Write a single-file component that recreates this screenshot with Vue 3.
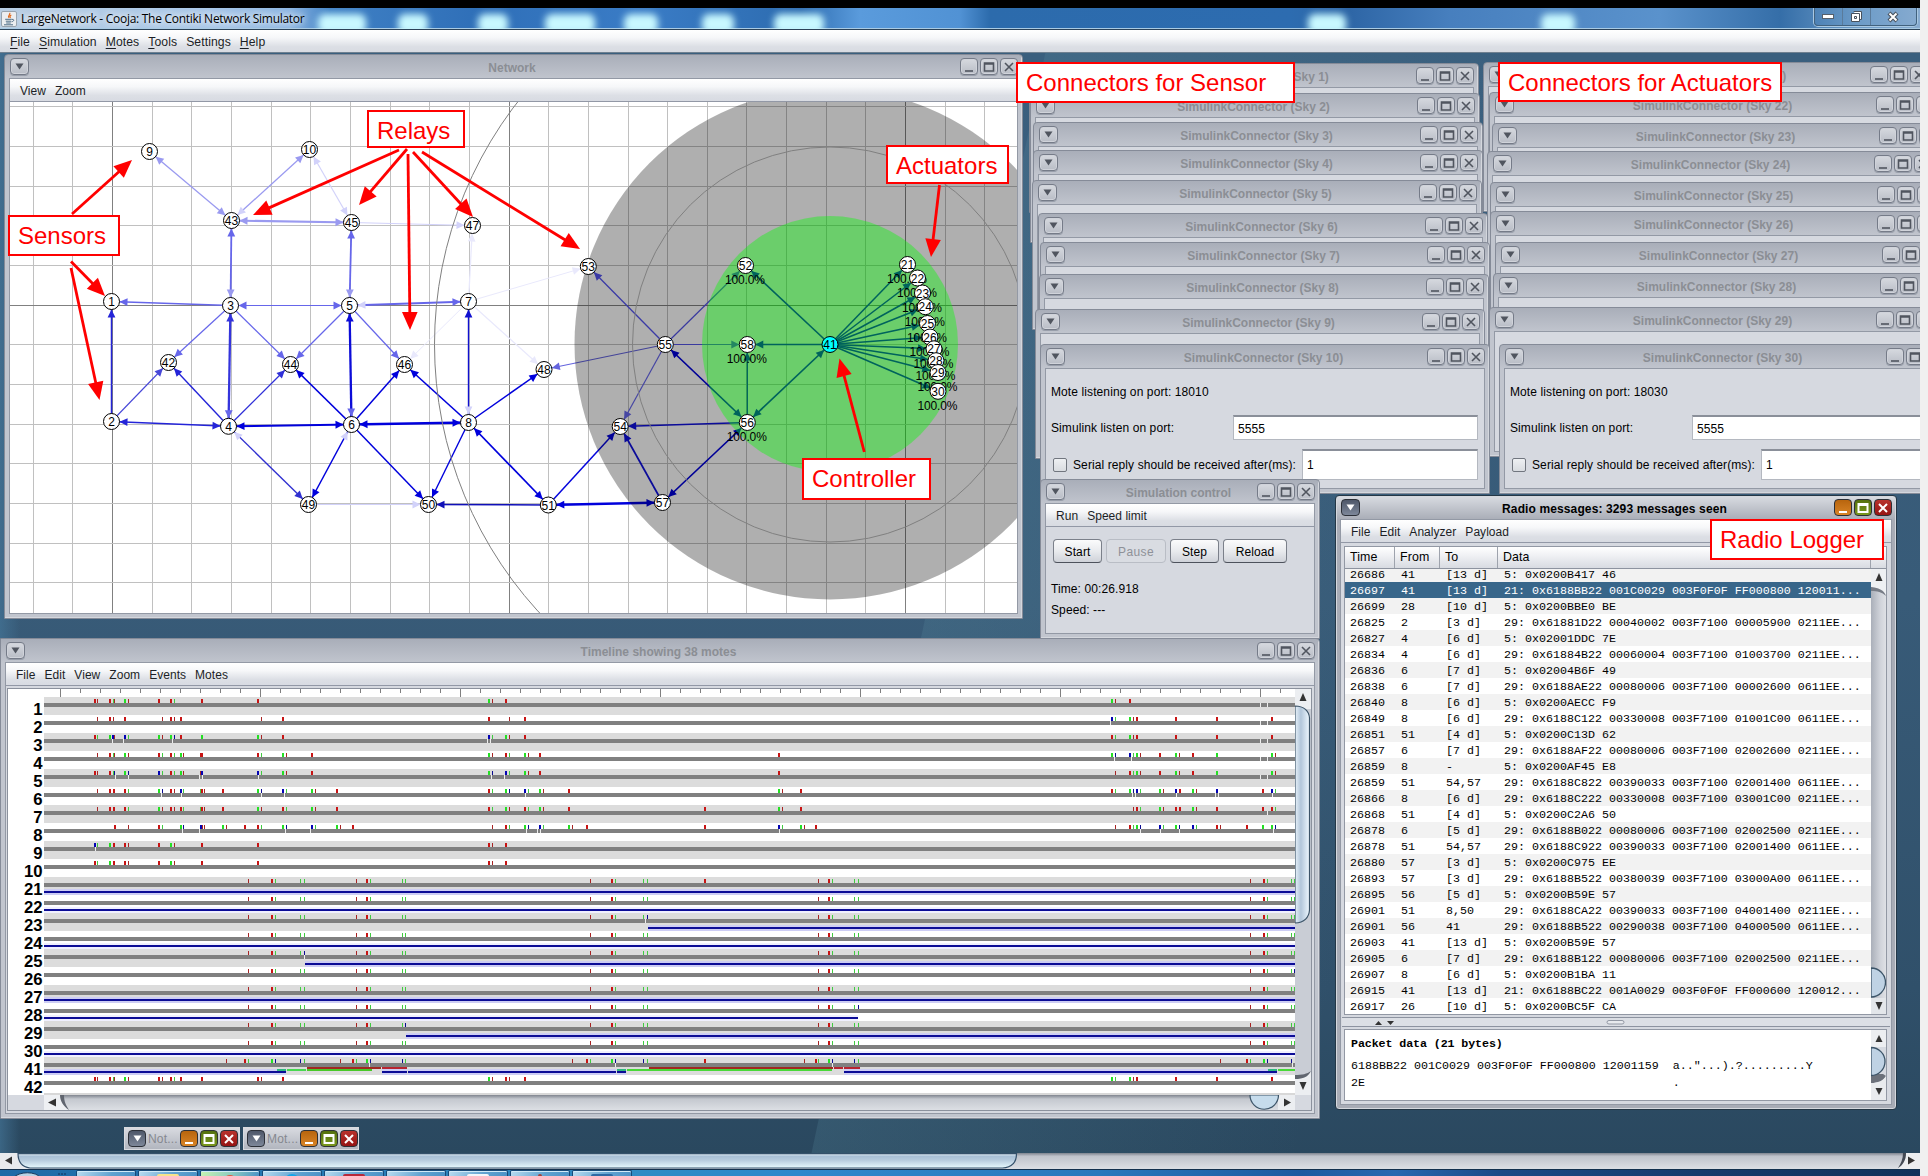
<script setup>
const stack = (base, list) => list.map(([n, x, y]) => ({
  kind: 'connector', title: `SimulinkConnector (Sky ${n})`, x: base + x, y, w: 450, h: 150, port: 18000 + n
}))

const windows = [
  { kind: 'network', title: 'Network', x: 4, y: 54, w: 1019, h: 565, menus: ['View', 'Zoom'] },
  ...stack(1483, [[21, 0, 62], [22, 6, 92], [23, 9, 123], [24, 4, 151], [25, 7, 182], [26, 7, 211], [27, 12, 242], [28, 10, 273], [29, 6, 307], [30, 16, 344]]),
  ...stack(1029, [[1, 0, 63], [2, 1, 93], [3, 4, 122], [4, 4, 150], [5, 3, 180], [6, 9, 213], [7, 11, 242], [8, 10, 274], [9, 6, 309], [10, 11, 344]]),
  { kind: 'control', title: 'Simulation control', x: 1040, y: 479, w: 280, h: 160, menus: ['Run', 'Speed limit'] },
  { kind: 'radio', title: 'Radio messages: 3293 messages seen', x: 1335, y: 495, w: 562, h: 615, active: true, menus: ['File', 'Edit', 'Analyzer', 'Payload'] },
  { kind: 'timeline', title: 'Timeline showing 38 motes', x: 0, y: 638, w: 1320, h: 481, menus: ['File', 'Edit', 'View', 'Zoom', 'Events', 'Motes'] }
]
const box = (w) => ({ left: w.x + 'px', top: w.y + 'px', width: w.w + 'px', height: w.h + 'px' })

/* ---- network graph ---- */
const vLines = [33, 72, 112, 152, 191, 231, 271, 310, 350, 390, 429, 469, 509, 548, 588, 628, 667, 707, 746, 786, 826, 865, 905, 945, 984]
const hLines = [106, 146, 186, 225, 265, 305, 344, 384, 424, 463, 503, 543, 582]
const darkV = [112, 509, 905]

const nodes = {
  1: [111.5, 301.5], 2: [111.5, 421.5], 3: [230.5, 305.5], 4: [228.5, 426.3], 5: [349.5, 305.5], 6: [351.5, 424.5],
  7: [468.5, 301.5], 8: [468.5, 422.5], 9: [149.5, 151.5], 10: [309.5, 149.5],
  21: [907.5, 264.5], 22: [917.5, 278], 23: [922.5, 293], 24: [925.3, 306.7], 25: [927.5, 323.5], 26: [930, 337],
  27: [934, 348.8], 28: [936, 360.7], 29: [938, 372.5], 30: [938, 391.3],
  41: [830, 344.5], 42: [168.5, 362.5], 43: [231.5, 220.5], 44: [290.5, 364.5], 45: [351.5, 222.5], 46: [404.5, 364.5],
  47: [472.5, 225.5], 48: [544, 369.5], 49: [308.5, 504.5], 50: [428.5, 504.5], 51: [548.3, 505], 52: [745.5, 265.5],
  53: [588.3, 266.5], 54: [620.2, 426.5], 55: [665.3, 344.5], 56: [747.3, 422.5], 57: [662.5, 502.5], 58: [747.3, 344.5]
}
const reached = new Set([52, 58, 56, 21, 22, 23, 24, 25, 26, 27, 28, 29, 30])
const nodeList = Object.entries(nodes).map(([id, p]) => ({ id, x: p[0], y: p[1], pct: reached.has(+id) }))

// from, to, colour, stroke width, colour of the arrow pointing back (optional)
const P = '#9a9af0', L = '#d2d2fa', V = '#e9e9fc', M = '#6666ea', D = '#2424d8', F = '#0000dc'
const links = [
  [43, 9, P, 1.3, P], [43, 10, P, 1.3, L], [45, 10, L, 1.2, L], [43, 45, P, 2, P], [45, 47, L, 1.1],
  [3, 43, M, 1.8, P], [5, 45, M, 1.8, P], [7, 47, V, 1.3], [3, 1, M, 1.6], [3, 5, M, 1.2, M], [5, 7, M, 1.8, L],
  [7, 53, V, 1], [7, 46, V, 1], [7, 48, V, 1.2], [3, 42, M, 1.2], [3, 44, M, 1.2], [5, 44, M, 1.3], [5, 46, M, 1.2],
  [2, 1, D, 1.5], [2, 42, '#4747d8', 1.1], [4, 42, D, 1.4], [4, 44, '#3030d8', 1.3], [6, 44, F, 1.7], [6, 46, F, 1.5],
  [8, 46, F, 1.6], [4, 3, '#3434dc', 2.3, M], [6, 5, '#0c0cd8', 2.3, M], [8, 7, '#1010d0', 1.4, L], [2, 4, D, 1.6, D],
  [4, 6, F, 2, F], [6, 8, F, 2.3, F], [4, 49, '#3030d0', 1.3, L], [6, 49, F, 1.5, L], [6, 50, F, 1.5], [8, 50, F, 1.4],
  [49, 50, L, 1.2], [51, 50, '#1010b8', 1.5], [8, 51, F, 1.7, F], [8, 48, F, 1.5], [55, 48, '#6464de', 1.2],
  [55, 53, '#5555f2', 1.3], [55, 52, '#5555e8', 1.2], [55, 58, '#5555e8', 1.2], [55, 54, '#6666ee', 1.2],
  [55, 56, F, 1.7, F], [51, 54, '#0505dd', 1.5], [57, 54, '#1010e0', 1.7], [56, 54, '#1010e0', 1.6], [51, 57, F, 2.3, F],
  [57, 56, F, 1.7, F], [41, 56, F, 1.7, F], [41, 58, F, 1.5], [56, 58, F, 1.3], [41, 52, F, 1.6],
  ...[21, 22, 23, 24, 25, 26, 27, 28, 29, 30].map((n) => [41, n, F, 1.5])
]
function head(x, y, dx, dy, len, half) {
  const bx = x - dx * len, by = y - dy * len
  return `${x},${y} ${bx - dy * half},${by + dx * half} ${bx + dy * half},${by - dx * half}`
}
const linkList = links.map(([a, b, color, width, back]) => {
  const [x1, y1] = nodes[a], [x2, y2] = nodes[b]
  const d = Math.hypot(x2 - x1, y2 - y1), dx = (x2 - x1) / d, dy = (y2 - y1) / d
  return {
    x1, y1, x2, y2, color, width, back,
    end: head(x2 - dx * 8, y2 - dy * 8, dx, dy, 8, 3.9),
    start: head(x1 + dx * 8, y1 + dy * 8, -dx, -dy, 8, 3.9)
  }
})

/* ---- annotations ---- */
const notes = [
  ['Sensors', 8, 215, 112, 41], ['Relays', 367, 110, 98, 38], ['Actuators', 886, 145, 123, 39],
  ['Controller', 802, 458, 129, 42], ['Connectors for Sensor', 1016, 62, 279, 41],
  ['Connectors for Actuators', 1498, 62, 284, 40], ['Radio Logger', 1710, 519, 174, 41]
].map(([text, x, y, w, h]) => ({ text, x, y, w, h }))
const arrows = [
  [72, 214, 132, 160], [71, 261.5, 105, 296], [71, 268, 99.5, 400], [399, 150, 253, 215], [407, 149, 359, 205],
  [408, 154, 410, 330], [413, 152, 473, 217], [422, 152, 580, 249], [939.5, 185, 931, 257], [864.3, 452, 839.5, 358.5]
].map(([x1, y1, x2, y2]) => {
  const d = Math.hypot(x2 - x1, y2 - y1), dx = (x2 - x1) / d, dy = (y2 - y1) / d
  return { x1, y1, x2: x2 - dx * 12, y2: y2 - dy * 12, tip: head(x2, y2, dx, dy, 18, 7.8) }
})

/* ---- timeline ---- */
const hue = { R: '#c81414', r: '#a82424', G: '#24e024', g: '#40cc40', B: '#0404b4', b: '#0c0c90' }
const common = 'r248 R272 g275 g300 g304 r356 R367 g370 g402 g405 r590 R612 g615 g643 g647 r818 R829 g832 g854 g858 r1250 R1264 g1267 g1291 g1294'
const FULL = [[44, 1295]]
const raw = [
  [1, 'R95 r97 R110 g113 r114 G125 r128 R159 R171 g174 R202 R258 G489 r492 R506 G1112 r1115 R1130', [1260, 1267]],
  [2, 'r97 R110 r113 R125 r162 R171 r174 R181 r261 R283 R489 r509 R525 B1112 g1115 G1130 r1133 R1137 R1176 R1217 R1272', [1110, 1260, 1267]],
  [3, 'R95 g97 G110 B113 r114 B125 g128 G159 r162 G171 b174 R181 G202 G258 r261 R283 B489 g492 G506 r509 R525 R1112 g1115 G1130 r1133 R1137 R1176 R1217 R1272', [112, 123, 172, 487, 490, 1260, 1267]],
  [4, 'r97 R110 g113 r114 G125 r128 R159 g162 R171 g174 G181 r183 R201 R202 R258 g261 G283 r286 R312 G489 r492 R506 g509 G525 r528 R540 R779 G1112 b1115 B1130 g1133 G1137 r1140 R1160 G1176 r1179 R1193 G1217 G1272 r1275', [1114, 1131, 1260, 1267]],
  [5, 'R95 r97 R110 g113 b114 G125 b128 B159 g162 R171 g174 G181 r183 r200 B202 B258 g261 G283 r286 R312 G489 b492 B506 g509 G525 r528 R540 R779 r1115 R1130 g1133 G1137 r1140 R1160 G1176 r1179 R1193 G1217 G1272 r1275', [115, 128, 199, 202, 258, 491, 504, 1260, 1267]],
  [6, 'r97 R110 R114 R125 g128 G159 b162 R171 r174 B181 g183 g200 R202 r204 R223 G258 b261 B283 g286 G312 r315 R337 R489 g492 G506 b509 B525 g528 G540 r543 R569 G779 r782 R801 R1112 g1115 G1130 b1133 B1137 g1140 G1160 r1163 B1176 R1180 G1193 r1196 B1217 R1263 B1272 g1275', [161, 181, 261, 284, 525, 1132, 1135, 1176, 1215, 1218, 1272]],
  [7, 'r97 R110 R114 R125 g128 G159 r162 R171 r174 R181 g183 g200 R202 r204 R223 G258 r261 R283 g286 G312 r315 R337 R489 g492 G506 r509 R525 g528 G540 r543 R569 R705 G779 r782 R801 r1133 R1137 g1140 G1160 r1163 R1176 R1180 G1193 r1196 R1217 R1263 R1272 g1275', [1267]],
  [8, 'R115 r128 R159 g162 G181 b183 B201 r202 r204 G223 r226 R245 R258 g261 G283 b286 B312 g315 G337 r340 R353 r492 R506 g509 G525 b528 B540 g543 G569 r572 R587 R705 B779 g782 G801 r804 R816 r1115 R1130 g1133 G1137 b1140 B1160 g1163 G1176 b1179 B1193 g1196 R1217 r1220 R1247 G1263 G1272 b1275', [182, 199, 285, 310, 526, 537, 540, 779, 1140, 1160, 1179, 1273]],
  [9, 'B95 g97 G110 R114 R125 r128 R159 G171 r174 R202 R258 R489 r492 R506', [95]],
  [10, 'R95 g97 G110 R114 R125 r128 R159 G171 r174 R202 R258 R489 r492 R506', []],
  [21, common + ' R705', [], FULL], [22, common, [], FULL],
  [23, common.replace('g647', 'b647'), [645], [[648, 1295]]], [24, common, [], FULL],
  [25, common.replace('g304', 'b304'), [304], [[305, 1295]]], [26, common.replace('g1294', 'b1294'), []],
  [27, common, [], FULL], [28, common.replace('g858', 'b858'), [], [[44, 858]]],
  [29, common.replace('g405', 'b405'), [], [[406, 1295]]], [30, common, [], FULL],
  [41, 'r226 R245 g248 G272 b275 b300 g304 r340 R353 g356 G367 b370 b402 g405 r572 R587 g590 G612 b615 b643 g647 R705 r804 R816 g818 G829 b832 b854 g858 r1220 R1247 g1250 G1264 b1267 b1291', [369, 615, 832, 1292], [[44, 286], [382, 407], [408, 616], [617, 626], [844, 1277]]],
  [42, 'R95 r97 R110 g113 r114 G125 r128 R159 r162 R171 g174 R181 R202 R258 r261 R283 G489 r492 R506 r509 R525 G1112 g1115 G1130 r1133 R1137 R1176 R1217 R1272', []]
]
const lanes = raw.map(([id, marks, gaps, spans = []], i) => ({
  id, gaps, spans, odd: i % 2 === 0,
  marks: marks.split(' ').map((m) => {
    const wide = m[0] < 'a'
    return { x: +m.slice(1) - (wide ? 1 : 0), w: wide ? 2 : 1, c: hue[m[0]] }
  })
}))
const collisions = [
  [277, 9, 12, '#30b880'], [287, 19, 12, '#48d850'], [307, 65, 12, '#48c828'], [307, 74, 10, '#a02820'], [382, 25, 10, '#b82430'],
  [617, 9, 12, '#30b880'], [627, 205, 12, '#48d838'], [649, 184, 10, '#a02820'], [834, 9, 10, '#b82430'], [844, 16, 10, '#b82430'],
  [1268, 9, 12, '#30b880'], [1278, 17, 12, '#48d838']
]
const rulers = Array.from({ length: 62 }, (_, i) => ({ x: 60 + i * 20, h: i % 10 ? 4 : 8 }))

/* ---- radio log ---- */
const log = `26686|41|[13 d]|5: 0x0200B417 46
26697|41|[13 d]|21: 0x6188BB22 001C0029 003F0F0F FF000800 120011...
26699|28|[10 d]|5: 0x0200BBE0 BE
26825|2|[3 d]|29: 0x61881D22 00040002 003F7100 00005900 0211EE...
26827|4|[6 d]|5: 0x02001DDC 7E
26834|4|[6 d]|29: 0x61884B22 00060004 003F7100 01003700 0211EE...
26836|6|[7 d]|5: 0x02004B6F 49
26838|6|[7 d]|29: 0x6188AE22 00080006 003F7100 00002600 0611EE...
26840|8|[6 d]|5: 0x0200AECC F9
26849|8|[6 d]|29: 0x6188C122 00330008 003F7100 01001C00 0611EE...
26851|51|[4 d]|5: 0x0200C13D 62
26857|6|[7 d]|29: 0x6188AF22 00080006 003F7100 02002600 0211EE...
26859|8|-|5: 0x0200AF45 E8
26859|51|54,57|29: 0x6188C822 00390033 003F7100 02001400 0611EE...
26866|8|[6 d]|29: 0x6188C222 00330008 003F7100 03001C00 0211EE...
26868|51|[4 d]|5: 0x0200C2A6 50
26878|6|[5 d]|29: 0x6188B022 00080006 003F7100 02002500 0211EE...
26878|51|54,57|29: 0x6188C922 00390033 003F7100 02001400 0611EE...
26880|57|[3 d]|5: 0x0200C975 EE
26893|57|[3 d]|29: 0x6188B522 00380039 003F7100 03000A00 0611EE...
26895|56|[5 d]|5: 0x0200B59E 57
26901|51|8,50|29: 0x6188CA22 00390033 003F7100 04001400 0211EE...
26901|56|41|29: 0x6188B522 00290038 003F7100 04000500 0611EE...
26903|41|[13 d]|5: 0x0200B59E 57
26905|6|[7 d]|29: 0x6188B122 00080006 003F7100 02002500 0211EE...
26907|8|[6 d]|5: 0x0200B1BA 11
26915|41|[13 d]|21: 0x6188BC22 001A0029 003F0F0F FF000600 120012...
26917|26|[10 d]|5: 0x0200BC5F CA`.split('\n').map((r) => r.split('|'))

const glows = [[318, 48], [398, 30], [478, 30], [545, 50], [624, 34], [702, 32], [774, 50], [1308, 38], [1541, 34]]
const mainMenus = ['File', 'Simulation', 'Motes', 'Tools', 'Settings', 'Help']
const tasks = ['folder', 'note', 'chrome', 'skype', 'red', 'term', 'cloud', 'matlab', 'net']
</script>

<template>
  <div class="screen">
    <div class="black"></div>
    <header class="titlebar">
      <i v-for="g in glows" :key="g[0]" class="glow" :style="{ left: g[0] + 'px', width: g[1] + 'px' }"></i>
      <svg class="java" width="16" height="16" viewBox="0 0 16 16">
        <rect x=".5" y=".5" width="15" height="15" rx="1.5" fill="#eceef0" stroke="#98a4ae" />
        <path d="M8.6 1.8c1.6 1.700-2.600 2.600-.6 5M10.300 4c-1.600.9-1.700 1.600-.7 2.900" fill="none" stroke="#e06a1c" stroke-width="1.200" />
        <path d="M4.200 8.300h6.600M4.800 10.200h5.400M5.200 12h4.600M3 13.800h9M11 8.400c2.600-.5 2.200 2-.4 2.400" fill="none" stroke="#4d6d86" stroke-width="1" />
      </svg>
      <span class="app-title">LargeNetwork - Cooja: The Contiki Network Simulator</span>
      <div class="win7">
        <span><svg width="13" height="7"><rect x=".5" y="1.500" width="11" height="4" fill="#fff" stroke="#555f6b" /></svg></span>
        <span><svg width="13" height="13"><path d="M3.500 1.500h8v8h-2M1.500 3.500h8v8h-8z M4.500 6.500h2v2h-2z" fill="#fff" stroke="#48525e" /></svg></span>
        <span class="x"><svg width="13" height="12"><path d="M2 2l8 8M10 2l-8 8" stroke="#48525e" stroke-width="4.200" /><path d="M2.500 2.500l7 7M9.500 2.500l-7 7" stroke="#fff" stroke-width="2" /></svg></span>
      </div>
    </header>
    <nav class="menubar main">
      <span v-for="m in mainMenus" :key="m"><template v-if="m === 'Settings'">{{ m }}</template><template v-else><u>{{ m[0] }}</u>{{ m.slice(1) }}</template></span>
    </nav>

    <main class="desk"></main>

    <section v-for="w in windows" :key="w.title" class="win" :class="[w.kind, { active: w.active }]" :style="box(w)">
      <div class="bar">
        <b class="btn menu"><svg width="9" height="7"><path d="M.500 .5h8l-4 6z" /></svg></b>
        <span class="title">{{ w.title }}</span>
        <b class="btn min"><svg width="12" height="12"><path d="M2 10h8" /></svg></b>
        <b class="btn max"><svg width="12" height="12"><path d="M1.500 2h9v8h-9zM1.500 3h9" /></svg></b>
        <b class="btn close"><svg width="12" height="12"><path d="M2 2l8 8M10 2l-8 8" /></svg></b>
      </div>
      <div class="body">
        <nav v-if="w.menus" class="menubar"><span v-for="m in w.menus" :key="m">{{ m }}</span></nav>

        <svg v-if="w.kind === 'network'" class="graph" width="1007" height="511" viewBox="10 102 1007 511">
          <rect x="10" y="102" width="1007" height="511" fill="#fff" />
          <rect v-for="x in vLines" :key="'v' + x" :x="x" y="102" width="1" height="511" :fill="darkV.includes(x) ? '#808080' : '#c0c0c0'" />
          <rect v-for="y in hLines" :key="'h' + y" x="10" :y="y" width="1007" height="1" :fill="y === 305 ? '#808080' : '#c0c0c0'" />
          <g v-for="(l, i) in linkList" :key="i">
            <line :x1="l.x1" :y1="l.y1" :x2="l.x2" :y2="l.y2" :stroke="l.color" :stroke-width="l.width" />
            <polygon :points="l.end" :fill="l.color" />
            <polygon v-if="l.back" :points="l.start" :fill="l.back" />
          </g>
          <circle cx="830" cy="344" r="255.500" fill="#000" fill-opacity=".315" />
          <circle cx="830" cy="344" r="128" fill="#0f0" fill-opacity=".39" />
          <circle cx="830" cy="344.500" r="197.500" fill="none" stroke="#808080" />
          <circle cx="830" cy="344.500" r="395.500" fill="none" stroke="#808080" />
          <g v-for="n in nodeList" :key="n.id" class="node">
            <text v-if="n.pct" :x="n.x - .5" :y="n.y + 18.800" textLength="40">100.0%</text>
            <circle :cx="n.x" :cy="n.y" r="8" :fill="n.id === '41' ? '#0ff' : '#fff'" stroke="#000" />
            <text :x="n.x" :y="n.y + 4.500">{{ n.id }}</text>
          </g>
        </svg>

        <div v-else-if="w.kind === 'connector'" class="form">
          <p>Mote listening on port: {{ w.port }}</p>
          <p class="row"><span class="lab">Simulink listen on port:</span><span class="field">5555</span></p>
          <p class="row last"><i class="check"></i><span class="lab2">Serial reply should be received after(ms):</span><span class="field tall">1</span></p>
        </div>

        <div v-else-if="w.kind === 'control'" class="ctl">
          <div class="buttons"><span class="s">Start</span><span class="p off">Pause</span><span class="s">Step</span><span class="r">Reload</span></div>
          <p>Time: 00:26.918</p>
          <p>Speed: ---</p>
        </div>

        <div v-else-if="w.kind === 'radio'" class="log">
          <div class="table">
            <div class="thead"><span>Time</span><span>From</span><span>To</span><span>Data</span><span></span></div>
            <div class="tmain">
              <div class="rows">
                <div v-for="(r, i) in log" :key="i" class="tr" :class="{ alt: i % 2 === 0, sel: i === 1 }">
                  <span v-for="(c, j) in r" :key="j">{{ c }}</span>
                </div>
              </div>
              <div class="vsb">
                <svg width="15" height="445">
                  <path d="M0 0h15v27C13 21 8 19 0 18z" fill="#eef0f3" /><path d="M0 18c8 1 13 3 15 9-4-4-9-5-15-5z" fill="#777c86" />
                  <path d="M4.500 12l3.500-8 3.500 8z" fill="#333" />
                  <path d="M0 399a14.500 14.500 0 0 1 0 29z" fill="#bfd2e4" stroke="#3c5468" stroke-width="1.300" />
                  <rect x="0" y="429" width="15" height="17" fill="#e3e6ea" /><path d="M4.500 433l3.500 8 3.500-8z" fill="#333" />
                </svg>
              </div>
            </div>
          </div>
          <div class="split"><svg width="549" height="9"><path d="M33 7l3.500-4 3.500 4zM45 3l3.500 4 3.500-4z" fill="#333" /><rect x="265" y="2.500" width="17" height="3.500" rx="2" fill="#e8eaee" stroke="#9298a4" /></svg></div>
          <div class="packet">
            <div class="ptext"><b>Packet data (21 bytes)</b><pre>6188BB22 001C0029 003F0F0F FF000800 12001159  a..&quot;...).?.........Y
2E                                            .</pre></div>
            <div class="vsb">
              <svg width="15" height="70">
                <rect width="15" height="50" fill="#d6dae1" /><rect width="15" height="17" fill="#eceef1" />
                <path d="M4.500 12l3.500-7 3.500 7z" fill="#333" /><path d="M0 53c7 0 12-2 15-7l-3-2H0z" fill="#6c717b" />
                <path d="M0 17.500a14 14 0 0 1 0 28z" fill="#bfd2e4" stroke="#3c5468" stroke-width="1.300" />
                <path d="M0 53c7 0 12-2 15-7v24H0z" fill="#e9ebee" /><path d="M4.500 58l3.500 7 3.500-7z" fill="#333" />
              </svg>
            </div>
          </div>
        </div>

        <div v-else class="tl">
          <div class="tlmain">
            <svg width="1287" height="406" viewBox="8 689 1287 406">
              <rect x="8" y="689" width="1287" height="406" fill="#fff" />
              <rect v-for="r in rulers" :key="r.x" :x="r.x" y="689" width="1" :height="r.h" fill="#808080" />
              <g v-for="(l, i) in lanes" :key="l.id" :transform="`translate(0 ${697 + i * 18})`">
                <rect v-if="l.odd" x="44" y="0" width="1251" height="18" fill="#dcdcdc" />
                <rect x="44" y="6" width="1251" height="4" fill="#808080" />
                <g v-for="(s, k) in l.spans" :key="k">
                  <rect :x="s[0]" y="12" :width="s[1] - s[0]" height="6" :fill="l.odd ? '#cdcdf4' : '#f0f0ff'" />
                  <rect :x="s[0]" y="14" :width="s[1] - s[0]" height="2" fill="#0c0c96" />
                </g>
                <rect v-for="m in l.marks" :key="m.x + m.c" :x="m.x" y="2" :width="m.w" height="4" :fill="m.c" />
                <rect v-for="g in l.gaps" :key="'g' + g" :x="g" y="6" width="1" height="4" fill="#eee" />
                <g v-if="l.id === 41"><rect v-for="c in collisions" :key="c[0] + c[3]" :x="c[0]" :y="c[2]" :width="c[1]" height="2" :fill="c[3]" /></g>
                <text x="42.500" y="17.700" class="lane">{{ l.id }}</text>
              </g>
              <rect x="44" y="1093" width="1251" height="2" fill="#d8d8d8" />
            </svg>
            <svg class="edge" width="16" height="406">
              <rect width="16" height="406" fill="#c9cdd5" /><rect width="16" height="20" fill="#eceef1" />
              <path d="M4.500 12l3.500-8 3.500 8z" fill="#333" />
              <path d="M0 17c9 0 14 5 14.500 12v192c-.5 7-5 13-14.500 13z" fill="url(#tv)" stroke="#3c5468" stroke-width="1.200" />
              <path d="M0 390c8 0 13-2 16-8v24H0z" fill="#eceef1" /><path d="M0 390c8 0 13-2 16-8-4 3-9 4-16 4z" fill="#60656f" />
              <path d="M4.500 393l3.500 8 3.500-8z" fill="#333" />
              <defs><linearGradient id="tv"><stop offset="0" stop-color="#e8f2fa" /><stop offset=".4" stop-color="#b2c6da" /><stop offset="1" stop-color="#eef8ff" /></linearGradient></defs>
            </svg>
          </div>
          <div class="hsb">
            <svg width="1251" height="15">
              <path d="M0 0h18c0 7 3 12 7 16H0z" fill="#eef0f3" /><path d="M16 0h4c0 7 2 10 5 15-6-4-9-9-9-15z" fill="#60656f" />
              <path d="M12 3.500v8l-8-4z" fill="#333" />
              <rect x="1234" width="17" height="16" fill="#eceef1" />
              <path d="M1206 0a14 14 0 0 0 28.500 0z" fill="#c6dcec" stroke="#3c5468" stroke-width="1.200" /><path d="M1240 3.500v8l7-4z" fill="#333" />
            </svg>
          </div>
        </div>
      </div>
    </section>

    <div class="icons">
      <div v-for="t in ['Not...', 'Mot...']" :key="t" class="icon active">
        <b class="btn menu"><svg width="9" height="7"><path d="M.500 .5h8l-4 6z" /></svg></b><span>{{ t }}</span>
        <b class="btn min"><svg width="12" height="12"><path d="M2 10h8" /></svg></b>
        <b class="btn max"><svg width="12" height="12"><path d="M1.500 2h9v8h-9zM1.500 3h9" /></svg></b>
        <b class="btn close"><svg width="12" height="12"><path d="M2 2l8 8M10 2l-8 8" /></svg></b>
      </div>
    </div>

    <div class="mainsb">
      <svg width="1920" height="16">
        <defs>
          <linearGradient id="mt" x2="0" y2="1"><stop offset="0" stop-color="#e4eef6" /><stop offset=".2" stop-color="#a9c0d6" /><stop offset=".45" stop-color="#b6cbdd" /><stop offset="1" stop-color="#e8fafe" /></linearGradient>
          <linearGradient id="mb" x2="0" y2="1"><stop offset="0" stop-color="#7e848f" /><stop offset=".2" stop-color="#bfc3cb" /><stop offset="1" stop-color="#dcdfe4" /></linearGradient>
        </defs>
        <rect width="1920" height="16" fill="url(#mb)" /><rect width="28" height="16" fill="#e8eaed" />
        <path d="M12 3.500v8l-7-4z" fill="#333" />
        <path d="M18 .6H1016.500c0 8-4 14-14 14.400H30C22 14 18 9 18 .6z" fill="url(#mt)" stroke="#34506a" stroke-width="1.200" />
        <path d="M1906 0h14v16h-22c5-4 8-9 8-16z" fill="#eceef0" /><path d="M1903 0h3c0 7-3 12-8 15 3-5 5-9 5-15z" fill="#444a54" />
        <path d="M1908 3.500v8l7-4z" fill="#333" />
      </svg>
    </div>
    <footer class="taskbar">
      <svg class="orb" width="76" height="8"><path d="M13 8C19 1 36 1 41 8z" fill="#b9d3e4" stroke="#16395c" /><path d="M58 4h2m1 0h2m1 0h2" stroke="#12305a" /></svg>
      <span v-for="t in tasks" :key="t" class="task" :class="t"><i></i></span>
    </footer>

    <svg class="arrows" width="1920" height="700">
      <g v-for="(a, i) in arrows" :key="i">
        <line :x1="a.x1" :y1="a.y1" :x2="a.x2" :y2="a.y2" stroke="#f00" stroke-width="2.800" /><polygon :points="a.tip" fill="#f00" />
      </g>
    </svg>
    <div v-for="n in notes" :key="n.text" class="note" :style="box(n)">{{ n.text }}</div>
  </div>
</template>

<style>
body { margin: 0; background: #f0f0f0; }
</style>

<style scoped>
* { box-sizing: border-box; }
p { margin: 0; }
.screen { position: relative; display: flex; flex-direction: column; width: 1920px; height: 1176px; overflow: hidden; font: 12px "Liberation Sans", Arial, sans-serif; color: #000; }
.black { height: 8px; background: #000; }
.titlebar { position: relative; display: flex; align-items: center; height: 22px; padding-left: 1px; overflow: hidden; border-bottom: 1px solid #2b4258; box-shadow: inset 0 -1px #a9cbe4;
  background: linear-gradient(90deg, #b8cde2 0, #aac8e8 200px, #8db6e2 290px, #3f80c4 330px, #2f6fb8 480px, #3a7cc6 640px, #2d6cb0 800px, #5a9bdc 860px, #5192d4 960px, #2c6bac 990px, #2d6cb0 1290px, #2e66a6 1350px, #477fbe 1450px, #5a92cc 1660px, #356ea8 1780px, #6d9cc8 1860px, #87abd0 100%); }
.glow { position: absolute; bottom: -5px; height: 20px; background: #c8f8ff; border-radius: 7px; filter: blur(3.5px); }
.java { position: relative; }
.app-title { position: relative; margin-left: 4px; font: 12px "Open Sans", "Noto Sans", sans-serif; letter-spacing: -.28px; line-height: 20px; white-space: nowrap; text-shadow: 0 0 6px #fff, 0 0 8px #fff; }
.win7 { display: flex; align-self: flex-start; height: 18px; width: 103px; margin-left: auto; margin-right: 3px; border: 1px solid #41627f; border-top: 0; border-radius: 0 0 4px 4px; box-shadow: 0 0 0 1px #a9c8e2; }
.win7 span { display: flex; align-items: center; justify-content: center; width: 28px; border-right: 1px solid #5a7b9b; }
.win7 .x { flex: 1; border: 0; }

.menubar { display: flex; height: 23px; padding: 2px 0 0 10px; align-items: center; gap: 9px; background: linear-gradient(#fff 0, #f6f7f9 35%, #dcdfe5 75%, #d8dbe2 100%); border-bottom: 1px solid #9298a6; color: #1c1f26; white-space: nowrap; font-size: 12px; letter-spacing: .04px; }
.menubar.main { border-bottom: 1px solid #6f8090; font-size: 12.200px; letter-spacing: .08px; }
u { text-underline-offset: 2px; }
.desk { flex: 1; background:
  linear-gradient(102deg, transparent 0 1022px, rgba(90, 140, 160, .22) 1023px, transparent 1500px),
  linear-gradient(90deg, rgba(70, 120, 155, .6) 0, transparent 20px),
  linear-gradient(#3a5f7e 0, #385b78 50%, #30506a 85%, #2a485f 100%); }

.win { position: absolute; display: flex; flex-direction: column; padding: 0 4px 4px; border: 1px solid #858b98; border-radius: 4px 4px 0 0; background: linear-gradient(#a9aeb9 0, #c1c5ce 24px, #c1c5ce); box-shadow: inset -1px -1px #d4d7dd; }
.bar { position: relative; display: flex; align-items: center; flex: none; height: 23px; padding: 0 0 0 1px; gap: 2px; }
.title { flex: 1; text-align: center; font-weight: bold; font-size: 12px; color: #8b8e94; white-space: nowrap; padding: 2px 0 0 35px; }
.btn { display: flex; flex: none; align-items: center; justify-content: center; width: 18px; height: 17px; border: 1px solid #757b88; border-radius: 4px; background: linear-gradient(#d6d9df, #b9bdc6); box-shadow: 0 1px #989eaa, inset 0 0 0 1px #d0d3da; }
.btn svg { fill: none; stroke: #50555f; stroke-width: 1.600; }
.btn.menu { width: 19px; }
.btn.menu svg { fill: #50555f; stroke: none; }
.body { flex: 1; min-height: 0; overflow: hidden; border: 1px solid #9399a5; background: #d6d9e0; }
.active.win { border: 1px solid #243746; background: linear-gradient(#d9dce2 0, #a8acb6 24px, #a8acb6); box-shadow: inset 0 0 0 1px #d5d8de; border-radius: 4px; }
.active .title { color: #000; font-size: 12px; letter-spacing: .12px; }
.active .btn { border-color: #2c3038; box-shadow: none; }
.active .btn.menu { background: linear-gradient(#4e5769, #7d8799); }
.active .btn.menu svg { fill: #fff; }
.active .btn svg { stroke: #fff; stroke-width: 2; }
.active .btn.menu svg { stroke: none; }
.active .btn.min { background: linear-gradient(#b8650e, #d98426); }
.active .btn.max { background: linear-gradient(#54700e, #7a981e); }
.active .btn.close { background: linear-gradient(#b8322c, #961414); }

.graph { display: block; }
.node text { font: 12px "Liberation Sans", Arial, sans-serif; text-anchor: middle; }

.form { padding: 16px 6px 0 5px; letter-spacing: .1px; }
.form p { height: 14px; line-height: 14px; white-space: nowrap; }
.form .row { display: flex; height: 25px; margin-top: 16px; align-items: center; }
.lab { flex: none; width: 182px; }
.field { flex: none; width: 245px; height: 25px; padding-left: 4px; line-height: 24px; background: #fff; border: 1px solid #b4b8c0; border-top: 2px solid #8a8f99; }
.form .row.last { height: 31px; margin-top: 9px; }
.field.tall { width: 176px; height: 31px; line-height: 29px; }
.check { flex: none; width: 14px; height: 14px; margin-left: 2px; border: 1px solid #71767f; border-radius: 2px; background: linear-gradient(#eef0f3, #d9dce1); }
.lab2 { flex: none; width: 235px; padding-left: 6px; }

.ctl { padding: 12px 5px; letter-spacing: .1px; }
.buttons { display: flex; gap: 4px; padding-left: 2px; margin-bottom: 19px; }
.buttons span { height: 24px; line-height: 24px; text-align: center; border: 1px solid #7b808a; border-bottom-color: #4d525c; border-radius: 4px; background: linear-gradient(#fbfbfc, #e9ebee 50%, #cfd2d9); }
.buttons .s { width: 49px; }
.buttons .p { width: 60px; letter-spacing: .4px; }
.buttons .r { width: 64px; }
.buttons .off { color: #8e9198; border-color: #b9bdc5; background: #d9dce2; }
.ctl p { height: 21px; line-height: 14px; }

.log { padding: 3px 3px; }
.table { border: 1px solid #9298a4; height: 469px; width: 543px; background: #fff; }
.thead, .tr { display: grid; grid-template-columns: 50px 45px 58px 1fr; }
.thead { grid-template-columns: 50px 45px 58px 373px 1fr; height: 22px; line-height: 21px; font-size: 12.400px; background: linear-gradient(#fff, #f0f1f4 40%, #d8dbe1); border-bottom: 1px solid #8d939f; }
.thead span { padding-left: 5px; border-right: 1px solid #9ea3ad; letter-spacing: .1px; }
.thead span:last-child { border: 0; }
.tmain { display: flex; height: 445px; }
.rows { display: flex; flex-direction: column; justify-content: flex-end; width: 527px; overflow: hidden; }
.tr { flex: none; height: 16px; line-height: 19px; padding-left: 5px; font-family: "Liberation Mono", "Courier New", monospace; font-size: 11.660px; white-space: pre; background: #fff; }
.tr { grid-template-columns: 51px 45px 58px 1fr; }
.tr.alt { background: #f2f2f2; }
.tr.sel { background: #38668a; color: #fff; }
.vsb { width: 15px; background: linear-gradient(90deg, #aaafb9, #cfd2d9 60%, #dfe1e6); }
.vsb svg { display: block; }
.split { height: 10px; margin: 2px -2px; border-top: 1px solid #8d93a0; border-bottom: 1px solid #8d93a0; background: #dcdfe5; }
.split svg { display: block; }
.packet { display: flex; justify-content: space-between; width: 543px; height: 72px; background: #fff; border: 1px solid #9298a4; font: 11.660px "Liberation Mono", "Courier New", monospace; }
.ptext { padding: 7px 0 0 6px; }
.ptext b { display: block; height: 14px; line-height: 14px; margin-bottom: 7px; letter-spacing: -.1px; }
.ptext pre { margin: 0; font: inherit; line-height: 17px; }

.timeline { border-radius: 0 4px 0 0; }
.tl { margin: 2px 1px; border: 1px solid #8b919d; width: 1305px; }
.tlmain { display: flex; }
.tlmain svg { display: block; }
.lane { font: bold 16.700px "Liberation Sans", Arial, sans-serif; text-anchor: end; }
.hsb { height: 15px; margin-left: 36px; width: 1251px; background: linear-gradient(#7f848e, #c4c8cf 4px, #dcdfe4); }
.hsb svg { display: block; }

.icons { position: absolute; left: 124px; top: 1127px; display: flex; gap: 3px; }
.icon { display: flex; align-items: center; gap: 2px; width: 116px; height: 23px; padding: 0 3px; border: 1px solid #d9dbe0; background: linear-gradient(#d8dae0, #b2b6bf); }
.icon span { flex: 1; color: #85888f; letter-spacing: .2px; white-space: nowrap; }
.icon .btn { width: 18px; }
.mainsb { height: 16px; }
.mainsb svg { display: block; }
.taskbar { display: flex; gap: 2px; height: 7px; overflow: hidden; border-top: 1px solid #12304e; background: linear-gradient(90deg, #1f6aa6, #2f8cc4 640px, #2f88cc 800px, #2a78bc 1100px, #1c5aa0 1300px, #2868b0 1395px, #1b4a86 1500px, #163a6c 1700px, #12305a); }
.orb { flex: none; margin-right: -2px; }
.task { display: flex; justify-content: center; width: 60px; border: 1px solid #174a78; border-bottom: 0; border-radius: 2px 2px 0 0; background: linear-gradient(120deg, #b8dcf0, #5fa2d0 60%, #4a92c6); box-shadow: inset 0 1px #cfeaf8; }
.task i { width: 22px; height: 8px; margin-top: 3px; background: #e8c86a; border-radius: 2px 2px 0 0; }
.task.folder i { width: 14px; margin-top: 5px; }
.task.note i { background: #f6e38a; }
.task.chrome { background: linear-gradient(120deg, #c8f4b0, #90cfc0 50%, #4a92c6); }
.task.chrome i { width: 14px; margin-top: 4px; background: #e0593c; border-radius: 9px 9px 0 0; }
.task.skype i { width: 16px; background: #12a5e8; border-radius: 9px 9px 0 0; }
.task.red i { background: #b82838; }
.task.term i { width: 14px; margin-top: 5px; background: #10141c; }
.task.cloud i { background: #f2f6fa; }
.task.matlab i { width: 4px; background: #a0443c; }
.task.net i { background: #2c6aa4; }

.arrows { position: absolute; left: 0; top: 0; pointer-events: none; }
div.note { position: absolute; padding-left: 8px; border: 2px solid #f00; background: #fff; color: #f00; font-size: 24px; line-height: 37px; white-space: nowrap; }
</style>
